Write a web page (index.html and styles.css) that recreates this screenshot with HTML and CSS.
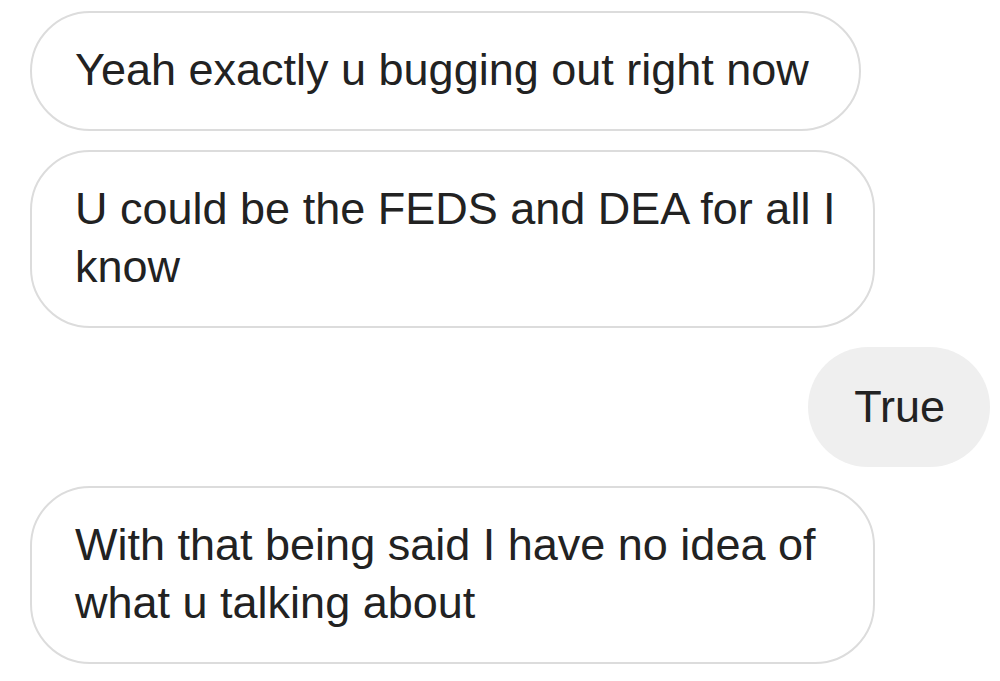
FILE: index.html
```html
<!DOCTYPE html>
<html>
<head>
<meta charset="utf-8">
<link rel="stylesheet" href="styles.css">
</head>
<body>
<div class="thread">
  <div class="msg in">Yeah exactly u bugging out right now</div>
  <div class="msg in wrap">U could be the FEDS and DEA for all I<br>know</div>
  <div class="msg out">True</div>
  <div class="msg in wrap">With that being said I have no idea of<br>what u talking about</div>
</div>
</body>
</html>
```
FILE: styles.css
```css
html, body {
  margin: 0;
  padding: 0;
  background: #ffffff;
}
.thread {
  width: 1000px;
  height: 681px;
  box-sizing: border-box;
  padding: 11px 10px 0 30px;
  display: flex;
  flex-direction: column;
  gap: 19px;
  font-family: "Liberation Sans", Arial, sans-serif;
  font-size: 45px;
  line-height: 58px;
  color: #222222;
  overflow: hidden;
}
.msg {
  width: fit-content;
  white-space: nowrap;
  border-radius: 60px;
  box-sizing: border-box;
}
.in {
  align-self: flex-start;
  border: 2px solid #dcdcdc;
  padding: 28px 50px 30px 43px;
}
.in.wrap {
  width: 845px;
}
.out {
  align-self: flex-end;
  background: #efefef;
  padding: 31px 45px 31px 46px;
}
```
